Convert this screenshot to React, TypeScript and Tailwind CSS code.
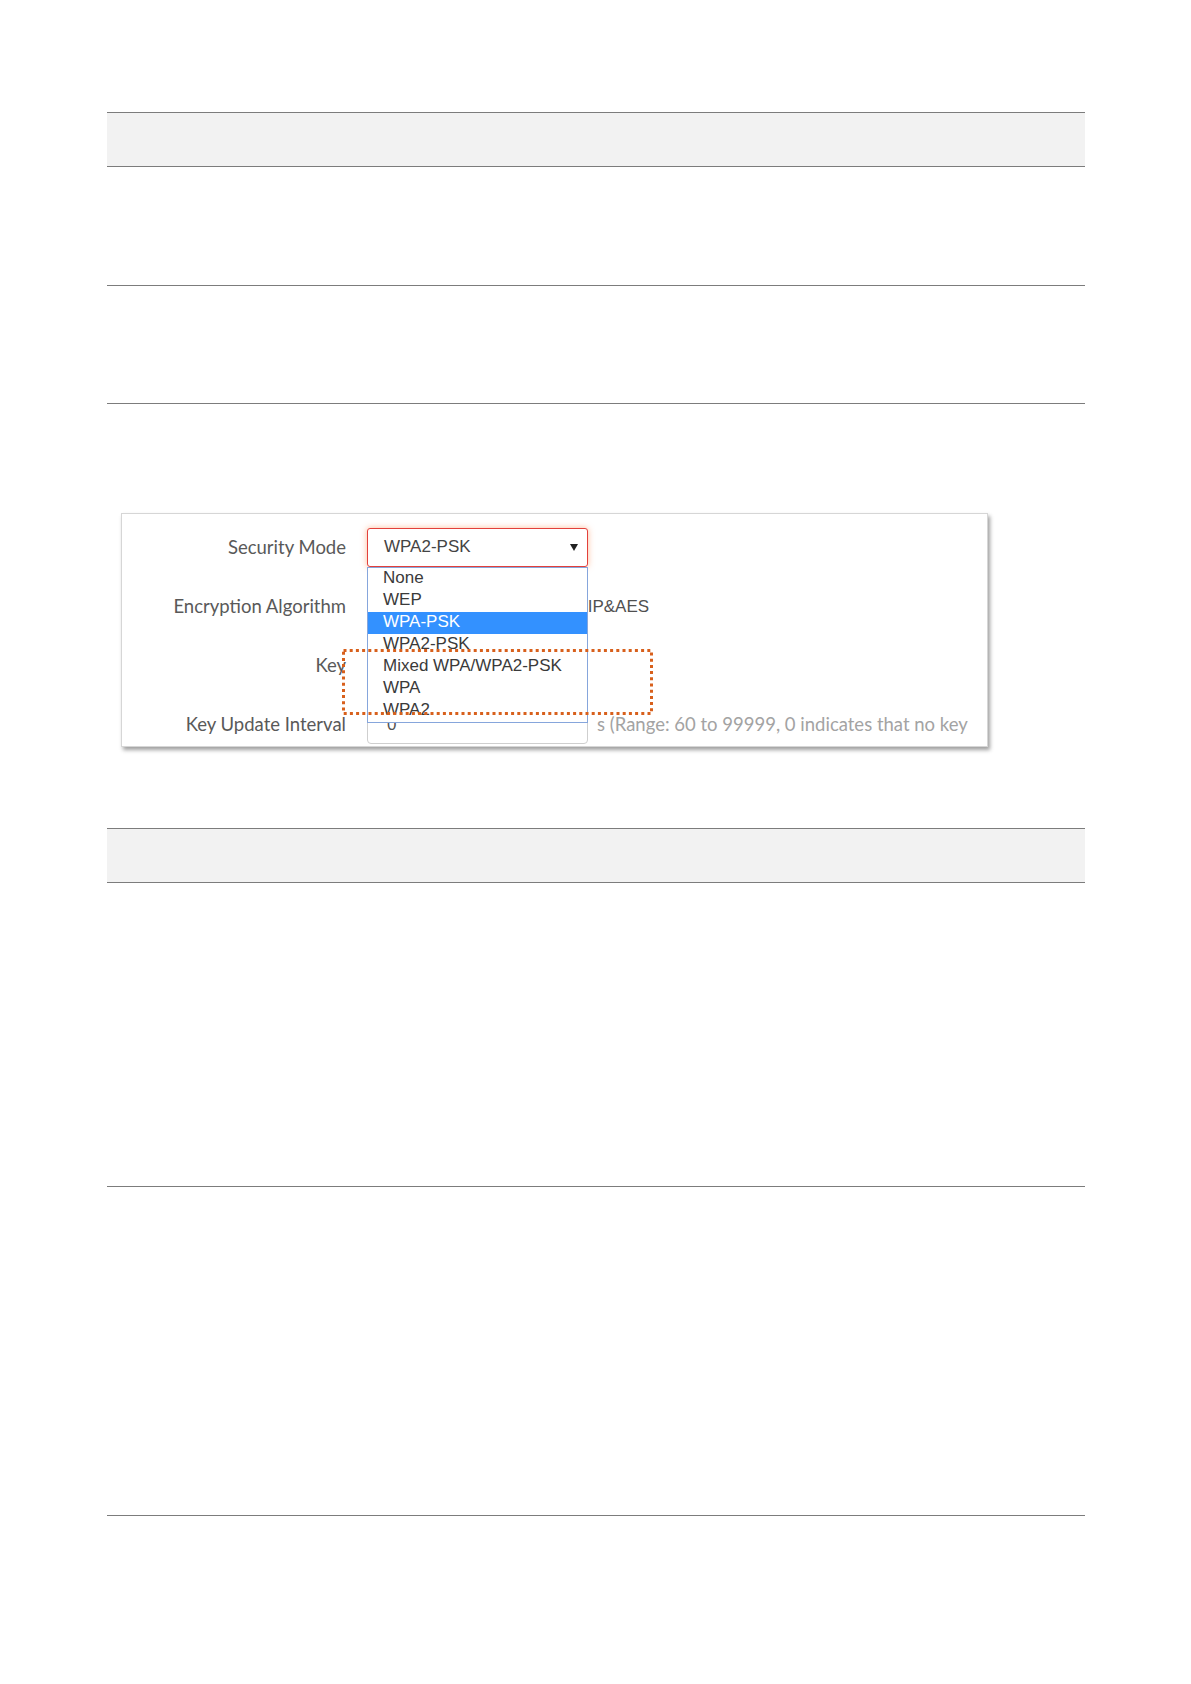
import React from "react";

const labelCls =
  "w-[224px] shrink-0 text-right text-[18.5px] text-[#595959] font-['Lato',sans-serif] leading-none";

const options = [
  "None",
  "WEP",
  "WPA-PSK",
  "WPA2-PSK",
  "Mixed WPA/WPA2-PSK",
  "WPA",
  "WPA2",
];

function SecurityPanel() {
  return (
    <div className="relative ml-[121px] mt-[109px] h-[234px] w-[867px] border border-[#d6d6d6] bg-white pt-[4px] shadow-[2px_3px_4px_rgba(0,0,0,0.38)]">
      {/* Row 1 */}
      <div className="flex h-[59px] items-center">
        <div className={labelCls}>Security Mode</div>
        <div className="relative z-10 ml-[21px] h-[39px] w-[221px]">
          <div className="flex h-full w-full items-center justify-between rounded-[3px] border border-[#e2403b] bg-white pb-[1px] pl-[16px] pr-[9px] shadow-[0_0_6px_rgba(255,130,70,0.55)]">
            <span className="font-['Liberation_Sans',Arial,sans-serif] text-[17px] text-[#444]">
              WPA2-PSK
            </span>
            <svg width="8" height="7" viewBox="0 0 8 7">
              <polygon points="0,0 8,0 4,7" fill="#222" />
            </svg>
          </div>
          <div className="absolute left-0 top-[39px] w-[221px] border border-[#86a6dc] bg-white">
            {options.map((o) => (
              <div
                key={o}
                className={
                  o === "WPA-PSK"
                    ? "h-[22px] bg-[#3391ff] pl-[15px] font-['Liberation_Sans',Arial,sans-serif] text-[17px] leading-[19px] text-white"
                    : "h-[22px] pl-[15px] font-['Liberation_Sans',Arial,sans-serif] text-[17px] leading-[19px] text-[#3a3a3a]"
                }
              >
                {o}
              </div>
            ))}
          </div>
        </div>
      </div>
      {/* Row 2 */}
      <div className="flex h-[59px] items-center">
        <div className={labelCls}>Encryption Algorithm</div>
        <div className="ml-[220px] font-['Liberation_Sans',Arial,sans-serif] text-[17px] text-[#505050]">
          TKIP&amp;AES
        </div>
      </div>
      {/* Row 3 */}
      <div className="flex h-[59px] items-center">
        <div className={labelCls}>Key</div>
      </div>
      {/* Row 4 */}
      <div className="flex h-[59px] items-center">
        <div className={labelCls}>Key Update Interval</div>
        <div className="ml-[21px] flex h-[38px] w-[221px] items-center rounded-[4px] border border-[#cfcfcf] bg-white pl-[19px] font-['Liberation_Sans',Arial,sans-serif] text-[17px] text-[#555]">
          0
        </div>
        <div className="ml-[9px] font-['Lato',sans-serif] text-[18.5px] text-[#a3a3a3]">
          s (Range: 60 to 99999, 0 indicates that no key
        </div>
      </div>
      {/* Annotation box */}
      <svg
        className="absolute left-[220px] top-[135px] z-20"
        width="312"
        height="67"
        viewBox="0 0 312 67"
      >
        <rect
          x="1.5"
          y="1.5"
          width="308"
          height="63"
          fill="none"
          stroke="#d8601c"
          strokeWidth="3"
          strokeDasharray="3 3.2"
        />
      </svg>
    </div>
  );
}

export default function App() {
  return (
    <div className="min-h-[1684px] w-[1191px] bg-white pt-[112px]">
      <div className="ml-[107px] w-[978px] border-t border-[#7c7c7c]">
        <div className="h-[54px] border-b border-[#7c7c7c] bg-[#f2f2f2]" />
        <div className="h-[119px] border-b border-[#7c7c7c]" />
        <div className="h-[118px] border-b border-[#7c7c7c]" />
      </div>
      <SecurityPanel />
      <div className="ml-[107px] mt-[81px] w-[978px] border-t border-[#7c7c7c]">
        <div className="h-[54px] border-b border-[#7c7c7c] bg-[#f2f2f2]" />
        <div className="h-[304px] border-b border-[#7c7c7c]" />
        <div className="h-[329px] border-b border-[#7c7c7c]" />
      </div>
    </div>
  );
}
